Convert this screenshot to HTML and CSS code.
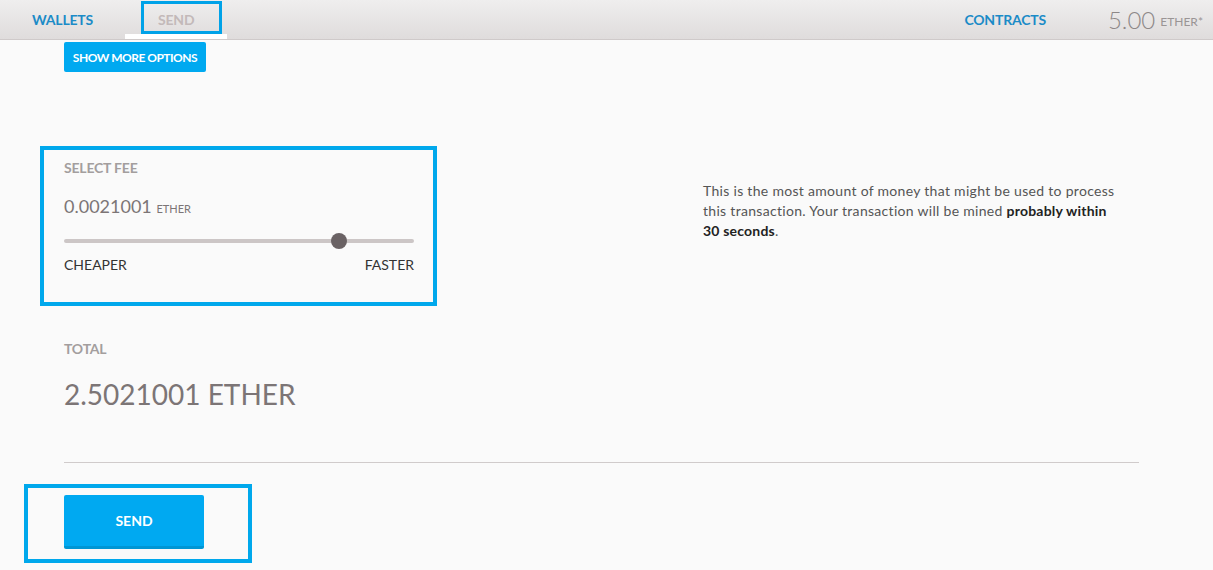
FILE: index.html
```html
<!DOCTYPE html>
<html>
<head>
<meta charset="utf-8">
<link rel="stylesheet" href="styles.css">
</head>
<body>
<header class="topbar">
  <nav class="nav">
    <a class="nav-item">WALLETS</a>
    <a class="nav-item nav-active"><span class="hl-nav"></span>SEND</a>
  </nav>
  <div class="nav-right">
    <a class="nav-item">CONTRACTS</a>
    <div class="balance">5.00 <span class="unit">ETHER*</span></div>
  </div>
</header>
<main class="main">
  <button class="btn-small">SHOW MORE OPTIONS</button>
  <section class="fee-row">
    <div class="fee-box">
      <h3 class="label">SELECT FEE</h3>
      <div class="fee-amount">0.0021001 <span class="unit-small">ETHER</span></div>
      <div class="slider"><div class="track"></div><div class="thumb"></div></div>
      <div class="slider-labels"><span>CHEAPER</span><span>FASTER</span></div>
    </div>
    <p class="fee-info">This is the most amount of money that might be used to process this transaction. Your transaction will be mined <strong>probably within 30 seconds</strong>.</p>
  </section>
  <section class="total">
    <h3 class="label">TOTAL</h3>
    <div class="total-amount">2.5021001 ETHER</div>
  </section>
  <hr class="divider">
  <div class="send-box">
    <button class="btn-send">SEND</button>
  </div>
</main>
</body>
</html>
```
FILE: styles.css
```css
* { box-sizing: border-box; }
body {
  margin: 0;
  background: #fafafa;
  font-family: Lato, "Liberation Sans", sans-serif;
  color: #555;
  overflow: hidden;
}
.topbar {
  height: 40px;
  background: linear-gradient(#efeeee, #dfdcdc);
  border-bottom: 1px solid #cfcaca;
  display: flex;
  justify-content: space-between;
  align-items: stretch;
}
.nav, .nav-right { display: flex; align-items: stretch; }
.nav-item {
  position: relative;
  display: flex;
  align-items: center;
  padding: 0 32px;
  font-size: 14px;
  font-weight: 700;
  color: #1b8bc7;
  letter-spacing: -0.2px;
}
.nav-active { color: #c3b9b9; padding: 0 33px; }
.nav-active::after {
  content: "";
  position: absolute;
  left: 0; right: 0;
  bottom: 0;
  height: 5px;
  background: #fff;
}
.hl-nav {
  position: absolute;
  left: 16px; right: 5px;
  top: 1px; height: 33px;
  border: 3px solid #00a2e8;
}
.balance {
  display: flex;
  align-items: center;
  padding: 0 10px 0 30px;
  font-size: 24px;
  font-weight: 300;
  color: #8d8888;
  gap: 5px;
}
.balance .unit { font-size: 12px; font-weight: 400; color: #9a9595; margin-top: 4px; }
.main { padding: 0 74px 0 64px; }
.btn-small {
  margin-top: 2px;
  height: 30px;
  width: 142px;
  border: 0;
  border-radius: 2px;
  background: #00a9f0;
  color: #fff;
  font-family: inherit;
  font-size: 12px;
  font-weight: 700;
  letter-spacing: -0.5px;
  padding: 0;
  display: block;
}
.fee-row {
  display: flex;
  align-items: flex-start;
  margin-top: 74px;
}
.fee-box {
  flex-shrink: 0;
  margin-left: -24px;
  width: 397px;
  height: 160px;
  border: 4px solid #00a8ec;
  padding: 8px 19px 0 20px;
}
.label {
  margin: 0;
  font-size: 14px;
  line-height: 20px;
  font-weight: 700;
  color: #a39e9e;
  letter-spacing: -0.2px;
}
.fee-amount {
  margin-top: 16px;
  font-size: 18px;
  line-height: 24px;
  color: #7c7576;
}
.unit-small { font-size: 11px; }
.slider { position: relative; height: 16px; margin-top: 12px; }
.track {
  position: absolute;
  left: 0; right: 0; top: 6px;
  height: 4px;
  border-radius: 2px;
  background: #ccc6c6;
}
.thumb {
  position: absolute;
  left: 267px; top: 0;
  width: 16px; height: 16px;
  border-radius: 50%;
  background: #6a6264;
}
.slider-labels {
  display: flex;
  justify-content: space-between;
  margin-top: 6px;
  font-size: 14px;
  line-height: 20px;
  color: #333;
}
.fee-info {
  margin: 35px 0 0 266px;
  width: 421px;
  flex-shrink: 0;
  font-size: 14px;
  line-height: 20px;
  letter-spacing: 0.3px;
  color: #555;
}
.fee-info strong { color: #222; letter-spacing: 0.2px; }
.total { margin-top: 33px; }
.total-amount {
  margin-top: 17px;
  font-size: 28px;
  line-height: 36px;
  color: #7c7576;
}
.divider {
  margin: 50px 0 0;
  border: 0;
  height: 1px;
  background: #d0cbcb;
}
.send-box {
  margin: 21px 0 0 -40px;
  width: 228px;
  height: 79px;
  border: 4px solid #00a8ec;
  padding: 7px 0 0 36px;
}
.btn-send {
  display: block;
  width: 140px;
  height: 54px;
  border: 0;
  border-bottom: 3px solid #0096d4;
  border-radius: 2px;
  background: #00a9f1;
  color: #fff;
  font-family: inherit;
  font-size: 14px;
  font-weight: 700;
  padding: 0;
}
```
